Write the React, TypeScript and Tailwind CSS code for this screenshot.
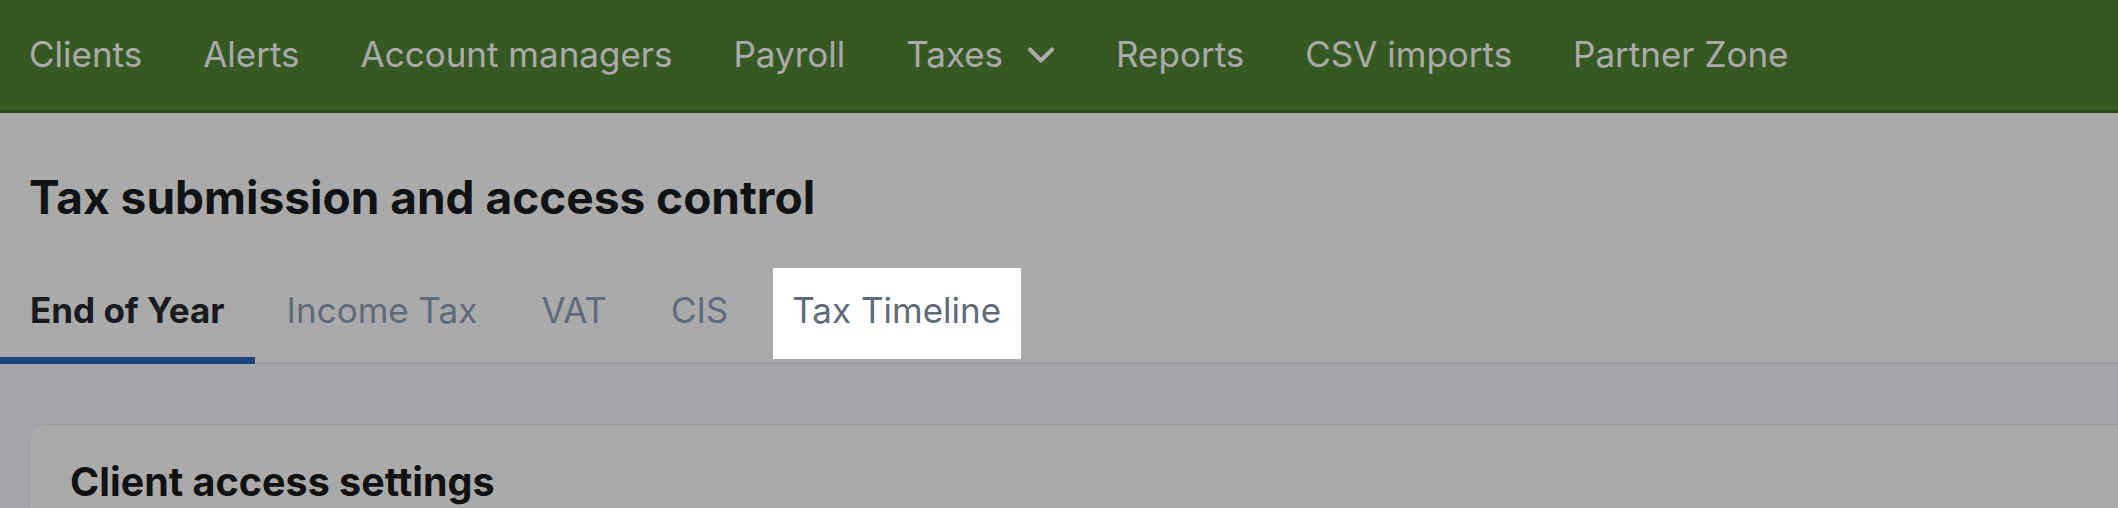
import { ChevronDown } from "lucide-react";

const navItems = [
  "Clients",
  "Alerts",
  "Account managers",
  "Payroll",
  "Taxes",
  "Reports",
  "CSV imports",
  "Partner Zone",
];

const tabs = ["End of Year", "Income Tax", "VAT", "CIS", "Tax Timeline"];

export default function App() {
  const active = "End of Year";
  const highlighted = "Tax Timeline";

  return (
    <div
      className="min-h-screen w-full overflow-hidden bg-white"
      style={{ fontFamily: "Inter, 'Noto Sans', sans-serif" }}
    >
      <nav className="flex h-[113px] items-center gap-[61px] border-b-[3px] border-[#426b2c] bg-[#518435] pb-[1px] pl-[29px] text-[35px] text-white">
        {navItems.map((item) => (
          <a key={item} className="flex items-center gap-[16px] whitespace-nowrap">
            {item}
            {item === "Taxes" && (
              <ChevronDown size={44} strokeWidth={2.2} className="-mr-[8px]" />
            )}
          </a>
        ))}
      </nav>

      <div className="px-[29px] pt-[54px]">
        <h1 className="text-[46px] leading-[60px] font-bold text-[#1a1b1e]">
          Tax submission and access control
        </h1>
      </div>

      <div className="mt-[37px] flex border-b-2 border-[#eaeaf0]">
        {tabs.map((tab) => (
          <button
            key={tab}
            className={
              tab === active
                ? "relative -mb-[2px] border-b-[7px] border-[#2e67b7] px-[30px] pt-[21px] pb-[22px] text-[35px] leading-[50px] font-bold text-[#1a1b1e]"
                : "relative px-[32px] pt-[21px] pb-[27px] text-[35px] leading-[50px] text-[#5f6b7a]"
            }
          >
            {tab === highlighted && (
              <span className="absolute top-[4px] right-[12px] bottom-[3px] left-[13px] z-10 bg-white shadow-[0_0_0_9999px_rgba(0,0,0,0.333)]" />
            )}
            <span className="relative z-20">{tab}</span>
          </button>
        ))}
      </div>

      <div className="bg-[#f6f8ff] pt-[60px] pl-[29px]">
        <div className="-mr-[40px] rounded-tl-[16px] border border-[#efeff5] bg-white px-[40px] pt-[32px] pb-[40px]">
          <h2 className="text-[39.5px] leading-[50px] font-bold text-[#1a1a1a]">
            Client access settings
          </h2>
        </div>
      </div>
    </div>
  );
}
